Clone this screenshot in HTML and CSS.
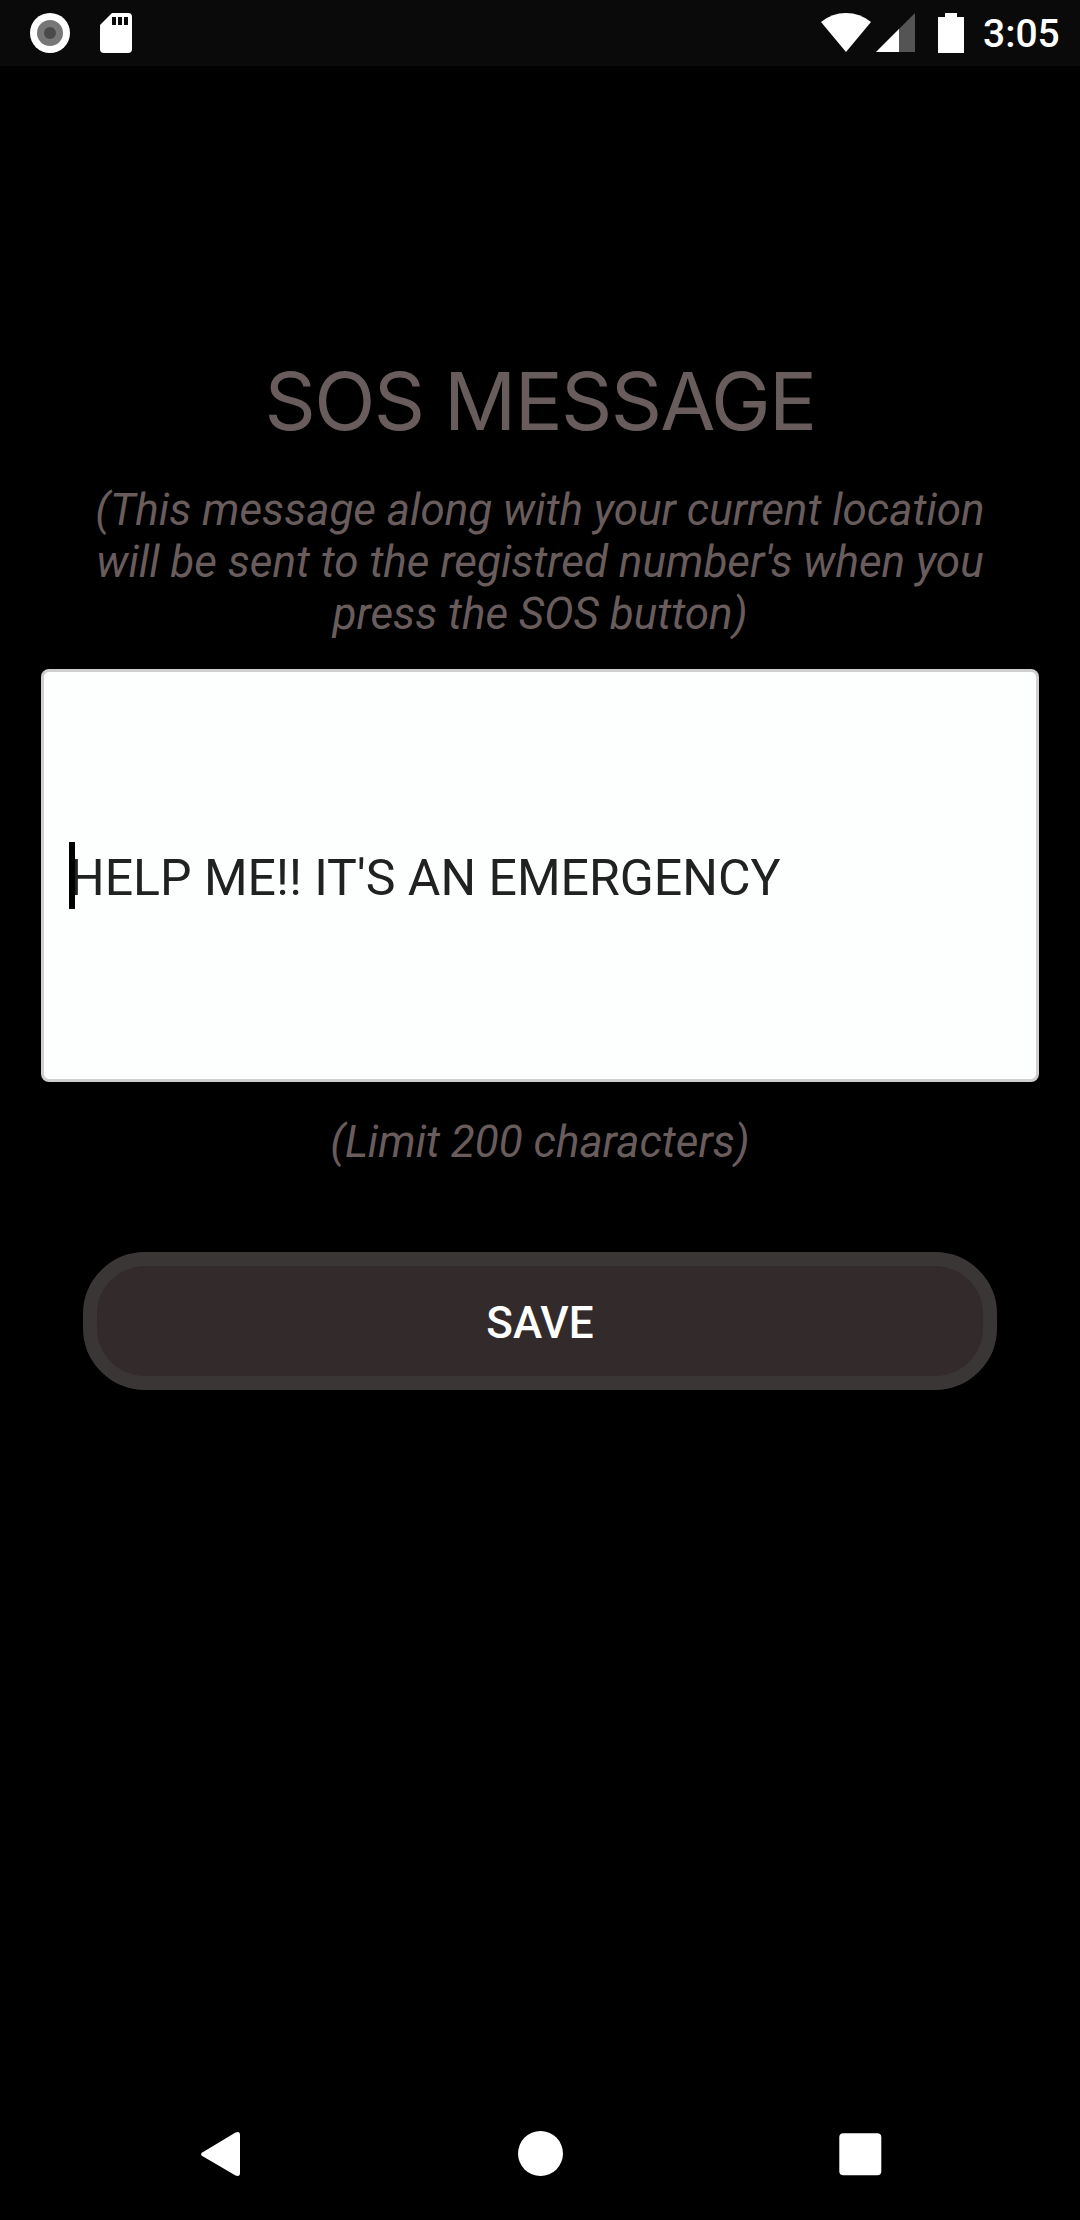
FILE: index.html
```html
<!DOCTYPE html>
<html lang="en">
<head>
  <meta charset="UTF-8" />
  <meta name="viewport" content="width=device-width, initial-scale=1.0"/>
  <title>SOS Message</title>
  <link rel="stylesheet" href="styles.css">
</head>
<body>

  <header class="status-bar">
    <svg class="record" width="40" height="40" viewBox="0 0 40 40">
      <circle cx="20" cy="20" r="20" fill="#fff"/>
      <circle cx="20" cy="20" r="13" fill="#777"/>
      <circle cx="20" cy="20" r="6" fill="#4a4a4a"/>
    </svg>
    <svg class="sd-card" width="32" height="40" viewBox="0 0 32 40">
      <path d="M12 0H28Q32 0 32 4V36Q32 40 28 40H4Q0 40 0 36V12Z" fill="#fff"/>
      <path d="M12 4h4v8h-4zM18 4h4v8h-4zM24 4h4v8h-4z" fill="#0a0a0a"/>
    </svg>
    <svg class="wifi" width="50" height="39" viewBox="0 0 50 39">
      <path d="M0 9Q11 0 25 0T50 9L25 39Z" fill="#fff"/>
    </svg>
    <svg class="signal" width="39" height="39" viewBox="0 0 39 39">
      <path d="M39 0V39H0Z" fill="#545454"/>
      <path d="M23 16V39H0Z" fill="#fff"/>
    </svg>
    <svg class="battery" width="26" height="40" viewBox="0 0 26 40">
      <path d="M7 0H19V4H26V40H0V4H7Z" fill="#fff"/>
    </svg>
    <span class="clock">3:05</span>
  </header>

  <main class="container">
    <h1>SOS MESSAGE</h1>
    <p class="hint">(This message along with your current location<br>will be sent to the registred number's when you<br>press the SOS button)</p>
    <div class="message-box">
      <input type="text" class="message" value="HELP ME!! IT'S AN EMERGENCY" maxlength="200" />
      <span class="caret"></span>
    </div>
    <p class="limit">(Limit 200 characters)</p>
    <button class="save">SAVE</button>
  </main>

  <nav class="nav-bar">
    <svg width="46" height="46" viewBox="0 0 46 46">
      <path d="M7 20.5L38.5 1.5Q43 -.5 43 4V42Q43 46 38.5 44.5L7 26Q1 23.2 7 20.5Z" fill="#fff"/>
    </svg>
    <svg width="46" height="46" viewBox="0 0 46 46">
      <circle cx="22.5" cy="22.5" r="22.5" fill="#fff"/>
    </svg>
    <svg width="46" height="46" viewBox="0 0 46 46">
      <rect x="1.3" y="2.3" width="42" height="42" rx="4" fill="#fff"/>
    </svg>
  </nav>

</body>
</html>
```

FILE: styles.css
```css
* {
  box-sizing: border-box;
}
body {
  margin: 0;
  height: 2220px;
  display: flex;
  flex-direction: column;
  background: #000;
  color: #695c5c;
  font-family: Roboto, sans-serif;
  overflow: hidden;
}
.status-bar {
  height: 66px;
  padding: 13px 21px 0 30px;
  display: flex;
  align-items: flex-start;
  background: #0a0a0a;
}
.sd-card {
  margin-left: 30px;
}
.wifi {
  margin-left: auto;
}
.signal {
  margin-left: 5px;
}
.battery {
  margin-left: 23px;
}
.clock {
  width: 76px;
  margin-left: 19px;
  color: #fff;
  font-size: 39px;
  font-weight: 500;
  line-height: 43px;
  white-space: nowrap;
}
.container {
  flex: 1;
  padding: 285px 41px 0;
  text-align: center;
}
h1 {
  margin: 0;
  font-family: Inter, sans-serif;
  font-size: 80px;
  font-weight: 400;
  line-height: 100px;
  letter-spacing: -1.7px;
}
.hint, .limit {
  margin: 0;
  font-size: 44px;
  font-style: italic;
  line-height: 52px;
}
.hint {
  margin-top: 33px;
}
.message-box {
  position: relative;
  height: 413px;
  margin-top: 29px;
}
.message {
  width: 100%;
  height: 100%;
  padding: 4px 25px 0;
  border: 3px solid #d0cece;
  border-radius: 8px;
  background: #fdfefe;
  color: #212121;
  font-family: Roboto, sans-serif;
  font-size: 50px;
}
.caret {
  position: absolute;
  left: 28px;
  top: 173px;
  width: 6px;
  height: 67px;
  background: #000;
}
.limit {
  margin-top: 34px;
}
.save {
  display: block;
  width: 914px;
  height: 138px;
  margin: 84px auto 0;
  padding: 4px 0 0;
  border: 14px solid #3b3636;
  border-radius: 62px;
  background: #332b2b;
  color: #fff;
  font-family: Roboto, sans-serif;
  font-size: 44px;
  font-weight: 500;
}
.nav-bar {
  height: 89px;
  padding: 0 196px 0 197px;
  display: flex;
  justify-content: space-between;
}
```
